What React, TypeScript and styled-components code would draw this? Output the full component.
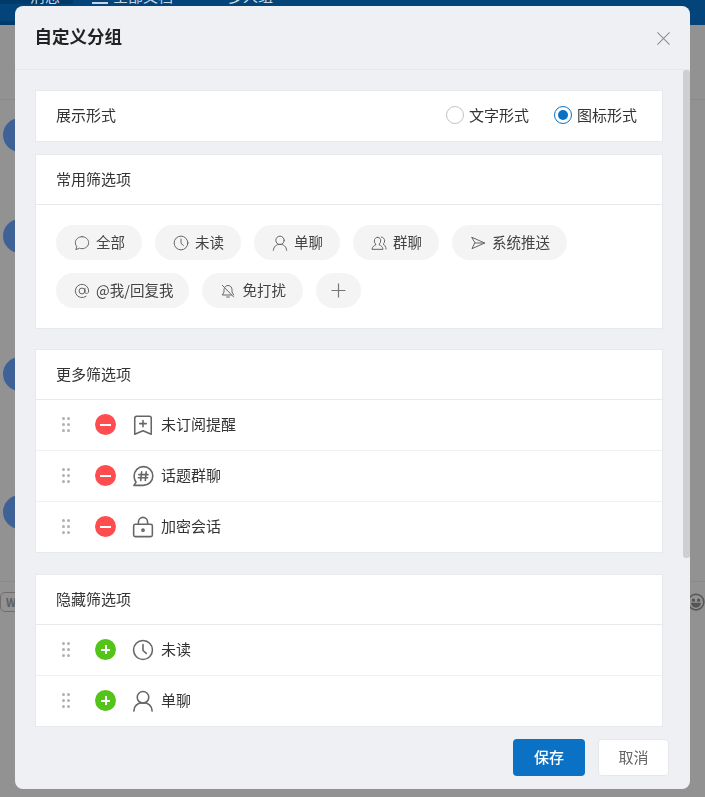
import React from "react";
import styled, { createGlobalStyle } from "styled-components";

const GlobalStyle = createGlobalStyle`
  html, body {
    margin: 0;
    padding: 0;
    height: 100%;
    overflow: hidden;
    font-family: "Noto Sans CJK SC", "Noto Sans", sans-serif;
  }
  * { box-sizing: border-box; }
`;

const Ico: React.FC<{ size: number; children: React.ReactNode }> = ({ size, children }) => (
  <svg width={size} height={size} viewBox="0 0 24 24" fill="none" stroke="#666" strokeWidth={size > 18 ? 1.7 : 1.5} strokeLinecap="round" strokeLinejoin="round">
    {children}
  </svg>
);

const BubbleGlyph = () => <path d="M12 2.500c5.200 0 10 3.900 10 9s-4.500 9-10 9c-1.300 0-2.600-.2-3.700-.7L2.800 22l1.300-4.700A8.800 8.800 0 0 1 2 11.500c0-5.100 4.800-9 10-9z" />;
const ClockGlyph = () => (
  <>
    <circle cx="12" cy="12" r="10.300" />
    <path d="M12 6V12.500l3.600 3.200" />
  </>
);
const UserGlyph = () => (
  <>
    <circle cx="12" cy="8" r="6.300" />
    <path d="M2 23c.5-5.800 4.500-9 10-9s9.500 3.200 10 9" />
  </>
);
const GroupGlyph = () => (
  <>
    <path d="M10 3.500a5 5 0 0 0-5 5.500c0 2 .8 3.500 2 4.500v1.500C4.500 16 2 17.500 1.500 21.500h16.500c-.5-4-3-5.500-5.500-6.500v-1.500c1.200-1 2-2.500 2-4.500a5 5 0 0 0-4.500-5.500z" />
    <path d="M15.500 3c3 .5 5 2.800 5 5.800 0 1.800-.7 3.200-1.700 4.200v1.500c2 .7 3.500 2.500 3.700 6.500" />
  </>
);
const SendGlyph = () => <path d="M3 3.500 22 12 3 20.500 7 12zM7 12h15" />;
const AtGlyph = () => (
  <>
    <circle cx="12" cy="12" r="4.400" />
    <path d="M16.400 8v5.500c0 3.500 5.600 3 5.600-1.500a10 10 0 1 0-4 8" />
  </>
);
const MuteGlyph = () => (
  <>
    <path d="M8 5.500c1-1 2.500-1.800 4-1.800 3.500 0 6 2.800 6 6.300v3.500l2.500 4.500" />
    <path d="M6.300 8.500c-.2.500-.3 1-.3 1.500v3.500L3.500 18H17" />
    <path d="M3.500 3.500 20.500 21M10 21h4" />
  </>
);
const BookmarkGlyph = () => (
  <>
    <path d="M5 2.500h14a2 2 0 0 1 2 2V22l-9-3.800L3 22V4.500a2 2 0 0 1 2-2z" />
    <path d="M12 7v7M8.500 10.500h7" />
  </>
);
const TopicGlyph = () => (
  <>
    <path d="M12.500 1.800c5.700 0 10.200 4.500 10.200 10.200s-4.500 10.200-10.200 10.200H2l2.500-3.500a10.200 10.200 0 0 1-2.200-6.700c0-5.700 4.500-10.200 10.200-10.200z" />
    <path d="M10.500 7.500 9.500 17M15.500 7.500l-1 9.500M7.500 10.500h10M7 14h10" />
  </>
);
const LockGlyph = () => (
  <>
    <rect x="1.800" y="9" width="20.400" height="13.500" rx="1.800" />
    <path d="M7 9V6.500a5 5 0 0 1 10 0V9" />
    <circle cx="12" cy="15.500" r="1.200" />
  </>
);

const chips = [
  [
    { label: "全部", icon: <BubbleGlyph /> },
    { label: "未读", icon: <ClockGlyph /> },
    { label: "单聊", icon: <UserGlyph /> },
    { label: "群聊", icon: <GroupGlyph /> },
    { label: "系统推送", icon: <SendGlyph /> },
  ],
  [
    { label: "@我/回复我", icon: <AtGlyph />, tight: true },
    { label: "免打扰", icon: <MuteGlyph /> },
  ],
];

const App: React.FC = () => {
  return (
    <>
      <GlobalStyle />
      <Backdrop>
        <TopBar>
          <TopTab $active>消息</TopTab>
          <TopTab>
            <TopIcon />
            全部文档
          </TopTab>
          <TopTab>多人组</TopTab>
        </TopBar>
        <SideLine $top={74} />
        <Avatar $top={18} />
        <Avatar $top={67} />
        <Avatar $top={104} />
        <Avatar $top={104} />
        <SideLine $top={52} />
        <InputTools>
          <WordBadge>W</WordBadge>
          <svg width="18" height="18" viewBox="0 0 24 24" fill="none" stroke="#555" strokeWidth="2">
            <circle cx="12" cy="12" r="10.500" />
            <circle cx="8.500" cy="9.500" r="1.300" fill="#555" />
            <circle cx="15.500" cy="9.500" r="1.300" fill="#555" />
            <path d="M6.500 14h11c-.5 3-3 4.500-5.500 4.500S7 17 6.500 14z" fill="#555" />
          </svg>
        </InputTools>
      </Backdrop>

      <Modal>
        <Header>
          <Title>自定义分组</Title>
          <CloseIcon width="13" height="13" viewBox="0 0 14 14">
            <path d="M.5.500l13 13M13.500.500l-13 13" stroke="#8c8c8c" strokeWidth="1.100" fill="none" />
          </CloseIcon>
        </Header>

        <Body>
          <Thumb />
          <Card $gap={12}>
            <DisplayRow>
              <TextLine>展示形式</TextLine>
              <RadioGroup>
                <RadioLabel>
                  <Radio />
                  <TextLine>文字形式</TextLine>
                </RadioLabel>
                <RadioLabel>
                  <Radio $on />
                  <TextLine>图标形式</TextLine>
                </RadioLabel>
              </RadioGroup>
            </DisplayRow>
          </Card>

          <Card $gap={20}>
            <CardHead><TextLine>常用筛选项</TextLine></CardHead>
            <ChipArea>
              {chips.map((row, i) => (
                <ChipRow key={i}>
                  {row.map((c) => (
                    <Chip key={c.label} $tight={"tight" in c}>
                      <Ico size={16}>{c.icon}</Ico>
                      <TextLine>{c.label}</TextLine>
                    </Chip>
                  ))}
                  {i === 1 && (
                    <AddChip>
                      <svg width="15" height="15" viewBox="0 0 15 15">
                        <path d="M7.500.500v14M.500 7.500h14" stroke="#777" strokeWidth="1.200" fill="none" />
                      </svg>
                    </AddChip>
                  )}
                </ChipRow>
              ))}
            </ChipArea>
          </Card>

          <Card $gap={21}>
            <CardHead><TextLine>更多筛选项</TextLine></CardHead>
            <FilterRow>
              <Drag><i /><i /><i /><i /><i /><i /></Drag>
              <RoundBtn $kind="remove" />
              <Ico size={22}><BookmarkGlyph /></Ico>
              <RowLabel>未订阅提醒</RowLabel>
            </FilterRow>
            <FilterRow>
              <Drag><i /><i /><i /><i /><i /><i /></Drag>
              <RoundBtn $kind="remove" />
              <Ico size={22}><TopicGlyph /></Ico>
              <RowLabel>话题群聊</RowLabel>
            </FilterRow>
            <FilterRow>
              <Drag><i /><i /><i /><i /><i /><i /></Drag>
              <RoundBtn $kind="remove" />
              <Ico size={22}><LockGlyph /></Ico>
              <RowLabel>加密会话</RowLabel>
            </FilterRow>
          </Card>

          <Card $gap={0}>
            <CardHead><TextLine>隐藏筛选项</TextLine></CardHead>
            <FilterRow>
              <Drag><i /><i /><i /><i /><i /><i /></Drag>
              <RoundBtn $kind="add" />
              <Ico size={22}><ClockGlyph /></Ico>
              <RowLabel>未读</RowLabel>
            </FilterRow>
            <FilterRow>
              <Drag><i /><i /><i /><i /><i /><i /></Drag>
              <RoundBtn $kind="add" />
              <Ico size={22}><UserGlyph /></Ico>
              <RowLabel>单聊</RowLabel>
            </FilterRow>
          </Card>
        </Body>

        <Footer>
          <SaveBtn>保存</SaveBtn>
          <CancelBtn>取消</CancelBtn>
        </Footer>
      </Modal>
    </>
  );
};
export default App;

const Backdrop = styled.div`
  width: 705px;
  height: 797px;
  background: #929292;
  overflow: hidden;
  display: flex;
  flex-direction: column;
`;
const TopBar = styled.div`
  height: 25px;
  flex: none;
  background: #03457a;
  display: flex;
  overflow: hidden;
`;
const TopTab = styled.div<{ $active?: boolean }>`
  display: flex;
  align-items: flex-end;
  gap: 5px;
  height: 4px;
  line-height: 16px;
  font-size: 15px;
  color: #c9d6e2;
  padding: 0 20px 0 ${(p) => (p.$active ? "30px" : "19px")};
  width: ${(p) => (p.$active ? "73px" : "auto")};
  background: ${(p) => (p.$active ? "#003a69" : "transparent")};
  box-shadow: ${(p) => (p.$active ? "0 21px 0 #003a69" : "none")};
  white-space: nowrap;
  & + & + & {
    padding-left: 35px;
  }
`;
const TopIcon = styled.span`
  width: 16px;
  height: 2px;
  background: #c9d6e2;
`;
const SideLine = styled.div<{ $top: number }>`
  height: 1px;
  flex: none;
  margin-top: ${(p) => p.$top}px;
  background: #8a8a8a;
`;
const Avatar = styled.div<{ $top: number }>`
  width: 34px;
  height: 34px;
  flex: none;
  margin: ${(p) => p.$top}px 0 0 3px;
  border-radius: 50%;
  background: #3f6296;
`;
const InputTools = styled.div`
  display: flex;
  justify-content: space-between;
  align-items: center;
  margin-top: 10px;
  height: 20px;
  flex: none;
`;
const WordBadge = styled.div`
  width: 24px;
  height: 20px;
  border: 1px solid #6f6f6f;
  border-radius: 5px;
  font-size: 11px;
  font-weight: 700;
  line-height: 18px;
  padding-left: 5px;
  color: #5f5f5f;
`;

const Modal = styled.div`
  position: fixed;
  left: 15px;
  top: 6px;
  width: 675px;
  height: 783px;
  background: #eff0f4;
  border-radius: 8px;
  overflow: hidden;
  display: flex;
  flex-direction: column;
`;
const Header = styled.div`
  height: 64px;
  flex: none;
  display: flex;
  align-items: center;
  justify-content: space-between;
  padding: 0 20px 0 19.5px;
  border-bottom: 1px solid #e6e7ea;
`;
const Title = styled.div`
  font-size: 17.5px;
  font-weight: 700;
  color: #222;
  padding-bottom: 4px;
`;
const CloseIcon = styled.svg`
  margin-top: 2px;
  display: block;
`;
const Body = styled.div`
  position: relative;
  flex: 1;
  min-height: 0;
  overflow: hidden;
  padding: 20px 27px 0 20px;
`;
const Thumb = styled.div`
  position: absolute;
  right: 0;
  top: 0;
  width: 7px;
  height: 488px;
  background: #cdcfd3;
  border-radius: 3px;
`;
const Card = styled.div<{ $gap: number }>`
  background: #fff;
  border: 1px solid #e8e9ec;
  margin-bottom: ${(p) => p.$gap}px;
  font-size: 15px;
  color: #333;
`;
const TextLine = styled.span`
  padding-bottom: 2px;
`;
const DisplayRow = styled.div`
  height: 50px;
  display: flex;
  align-items: center;
  justify-content: space-between;
  padding: 0 25px 2px 20px;
`;
const RadioGroup = styled.div`
  display: flex;
  gap: 25px;
`;
const RadioLabel = styled.label`
  display: flex;
  align-items: center;
  gap: 5px;
`;
const Radio = styled.span<{ $on?: boolean }>`
  width: 18px;
  height: 18px;
  border-radius: 50%;
  border: 1px solid ${(p) => (p.$on ? "#0a71c4" : "#c4c4c4")};
  display: flex;
  align-items: center;
  justify-content: center;
  &::after {
    content: "";
    width: 10px;
    height: 10px;
    border-radius: 50%;
    background: ${(p) => (p.$on ? "#0a71c4" : "transparent")};
  }
`;
const CardHead = styled.div`
  height: 50px;
  display: flex;
  align-items: center;
  padding-left: 20px;
  border-bottom: 1px solid #e8e9ec;
`;
const ChipArea = styled.div`
  padding: 20px 20px;
  display: flex;
  flex-direction: column;
  gap: 13px;
`;
const ChipRow = styled.div`
  display: flex;
  gap: 13px;
`;
const Chip = styled.div<{ $tight?: boolean }>`
  height: 35px;
  padding: 0 ${(p) => (p.$tight ? "16px" : "17px")} 0 18px;
  border-radius: 18px;
  background: #f4f4f4;
  display: flex;
  align-items: center;
  gap: 6px;
  font-size: 14.5px;
  color: #444;
  white-space: nowrap;
`;
const AddChip = styled(Chip)`
  width: 45px;
  padding: 0;
  justify-content: center;
`;
const FilterRow = styled.div`
  height: 51px;
  display: flex;
  align-items: center;
  padding: 0 0 1px 26px;
  border-bottom: 1px solid #f0f0f2;
  &:last-child {
    height: 50px;
    border-bottom: 0;
  }
  & > svg {
    margin-left: 16px;
  }
`;
const Drag = styled.div`
  display: grid;
  grid-template-columns: 3px 3px;
  grid-auto-rows: 3px;
  column-gap: 2px;
  row-gap: 3px;
  & > i {
    background: #b0b0b0;
    border-radius: 50%;
  }
`;
const RoundBtn = styled.span<{ $kind: "add" | "remove" }>`
  position: relative;
  width: 21px;
  height: 21px;
  margin-left: 25px;
  border-radius: 50%;
  background: ${(p) => (p.$kind === "add" ? "#52c41a" : "#ff4d4f")};
  &::before {
    content: "";
    position: absolute;
    left: ${(p) => (p.$kind === "add" ? "6px" : "5px")};
    right: ${(p) => (p.$kind === "add" ? "6px" : "5px")};
    top: 9.5px;
    height: 2px;
    background: #fff;
  }
  &::after {
    content: "";
    display: ${(p) => (p.$kind === "add" ? "block" : "none")};
    position: absolute;
    top: 6px;
    bottom: 6px;
    left: 9.5px;
    width: 2px;
    background: #fff;
  }
`;
const RowLabel = styled.span`
  margin-left: 7px;
  padding-bottom: 2px;
`;
const Footer = styled.div`
  height: 61px;
  flex: none;
  display: flex;
  align-items: flex-start;
  justify-content: flex-end;
  gap: 13px;
  padding: 11px 21px 0 0;
`;
const SaveBtn = styled.button`
  width: 72px;
  height: 37px;
  border: 0;
  border-radius: 4px;
  background: #0a71c4;
  color: #fff;
  padding: 0 0 2px;
  font: 500 15px "Noto Sans CJK SC", sans-serif;
`;
const CancelBtn = styled.button`
  width: 71px;
  height: 37px;
  border: 1px solid #e6e7ea;
  border-radius: 4px;
  background: #fff;
  color: #666;
  padding: 0 0 2px;
  font: 400 15px "Noto Sans CJK SC", sans-serif;
`;
